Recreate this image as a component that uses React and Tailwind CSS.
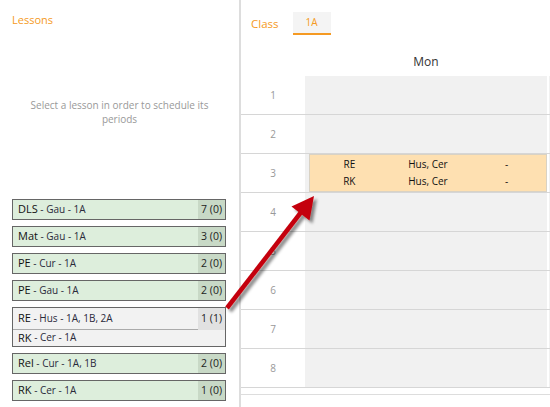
import React from 'react';

const lessons = [
  { subject: 'DLS', rest: ' - Gau - 1A', count: '7 (0)' },
  { subject: 'Mat', rest: ' - Gau - 1A', count: '3 (0)' },
  { subject: 'PE', rest: ' - Cur - 1A', count: '2 (0)' },
  { subject: 'PE', rest: ' - Gau - 1A', count: '2 (0)' },
];

function LessonBox({ subject, rest, count }) {
  return (
    <div className="h-[21px] flex border border-[#666] bg-[#ddeedc]">
      <div className="flex-1 flex items-center pl-[5px] text-[10px] text-[#2a2a3a] whitespace-pre">
        <span className="text-[11px] font-medium text-[#111]">{subject}</span>
        {rest}
      </div>
      <div className="w-[27px] flex items-center justify-end pr-[3px] bg-[#c8d9c6] text-[10.5px] text-[#222]">
        {count}
      </div>
    </div>
  );
}

function Arrow() {
  return (
    <svg className="absolute left-0 top-0 pointer-events-none" width="550" height="407" viewBox="0 0 550 407">
      <defs>
        <filter id="shadow" x="-20%" y="-20%" width="140%" height="140%">
          <feDropShadow dx="3" dy="3" stdDeviation="1.6" floodColor="#000" floodOpacity="0.45" />
        </filter>
      </defs>
      <g filter="url(#shadow)">
        <line x1="227" y1="308" x2="302" y2="211" stroke="#c4000b" strokeWidth="4.5" />
        <polygon points="314,196 291.5,206.5 309.5,220.5" fill="#c4000b" />
      </g>
    </svg>
  );
}

export default function App() {
  const periods = [1, 2, 3, 4, 5, 6, 7, 8];

  return (
    <div className="relative w-[550px] h-[407px] flex bg-white overflow-hidden font-['Open_Sans',sans-serif]">
      {/* Lessons panel */}
      <div className="w-[239px] shrink-0 flex flex-col">
        <div className="pl-3 pt-3 text-[11px] leading-[15px] text-[#f59a23]">Lessons</div>
        <div className="mt-[71px] px-[14px] text-center text-[10px] leading-[14px] text-[#999]">
          Select a lesson in order to schedule its
          <br />
          periods
        </div>
        <div className="mt-[73px] pl-3 w-[226px] flex flex-col gap-[6px]">
          {lessons.map((l, i) => (
            <LessonBox key={i} {...l} />
          ))}
          <div className="h-[40px] flex flex-col border border-[#666] bg-[#f2f2f2]">
            <div className="h-[25px] flex">
              <div className="flex-1 flex items-center pl-[5px] border-b border-[#aaa] text-[10px] text-[#2a2a3a] whitespace-pre">
                <span className="text-[11px] font-medium text-[#111]">RE</span>
                {' - Hus - 1A, 1B, 2A'}
              </div>
              <div className="w-[27px] flex items-center justify-end pr-[3px] bg-[#e1e1e1] text-[10.5px] text-[#222]">
                1 (1)
              </div>
            </div>
            <div className="flex-1 flex items-center pl-[5px] text-[10px] text-[#2a2a3a] whitespace-pre">
              <span className="text-[11px] font-medium text-[#111]">RK</span>
              {' - Cer - 1A'}
            </div>
          </div>
          <LessonBox subject="Rel" rest=" - Cur - 1A, 1B" count="2 (0)" />
          <LessonBox subject="RK" rest=" - Cer - 1A" count="1 (0)" />
        </div>
      </div>

      <div className="w-[2px] shrink-0 bg-[#dddddd]" />

      {/* Timetable panel */}
      <div className="flex-1 flex flex-col min-w-0">
        <div className="mt-3 h-[23px] flex items-center pl-[10px]">
          <span className="text-[11.5px] text-[#f59a23]">Class</span>
          <div className="ml-[14px] h-full w-[38px] flex items-center justify-center bg-[#f4f4f4] border-b-2 border-[#f59a23] text-[10px] text-[#f59a23]">
            1A
          </div>
        </div>

        <div className="h-[41px] flex">
          <div className="w-[64px] shrink-0" />
          <div className="w-[242px] shrink-0 flex items-end justify-center pb-[6px] text-[12px] leading-[16px] text-[#333]">
            Mon
          </div>
        </div>

        {periods.map((p) => (
          <div key={p} className="h-[39px] flex border-b border-[#d6d6d6]">
            <div className="w-[64px] shrink-0 flex items-center justify-center text-[10px] text-[#999]">{p}</div>
            <div className="w-[242px] shrink-0 bg-[#f1f1f1] pl-[4px]">
              {p === 3 && (
                <div className="h-full flex flex-col justify-center border border-[#d9d2c4] bg-[#fee0b1] text-[10px] leading-[17px] text-[#111]">
                  <div className="grid grid-cols-3 text-center">
                    <span>RE</span>
                    <span>Hus, Cer</span>
                    <span>-</span>
                  </div>
                  <div className="grid grid-cols-3 text-center">
                    <span>RK</span>
                    <span>Hus, Cer</span>
                    <span>-</span>
                  </div>
                </div>
              )}
            </div>
            <div className="w-[2px] shrink-0" />
            <div className="flex-1 bg-[#f1f1f1]" />
          </div>
        ))}
        <div className="h-[7px] border-b border-[#dddddd]" />
      </div>

      <Arrow />
    </div>
  );
}
